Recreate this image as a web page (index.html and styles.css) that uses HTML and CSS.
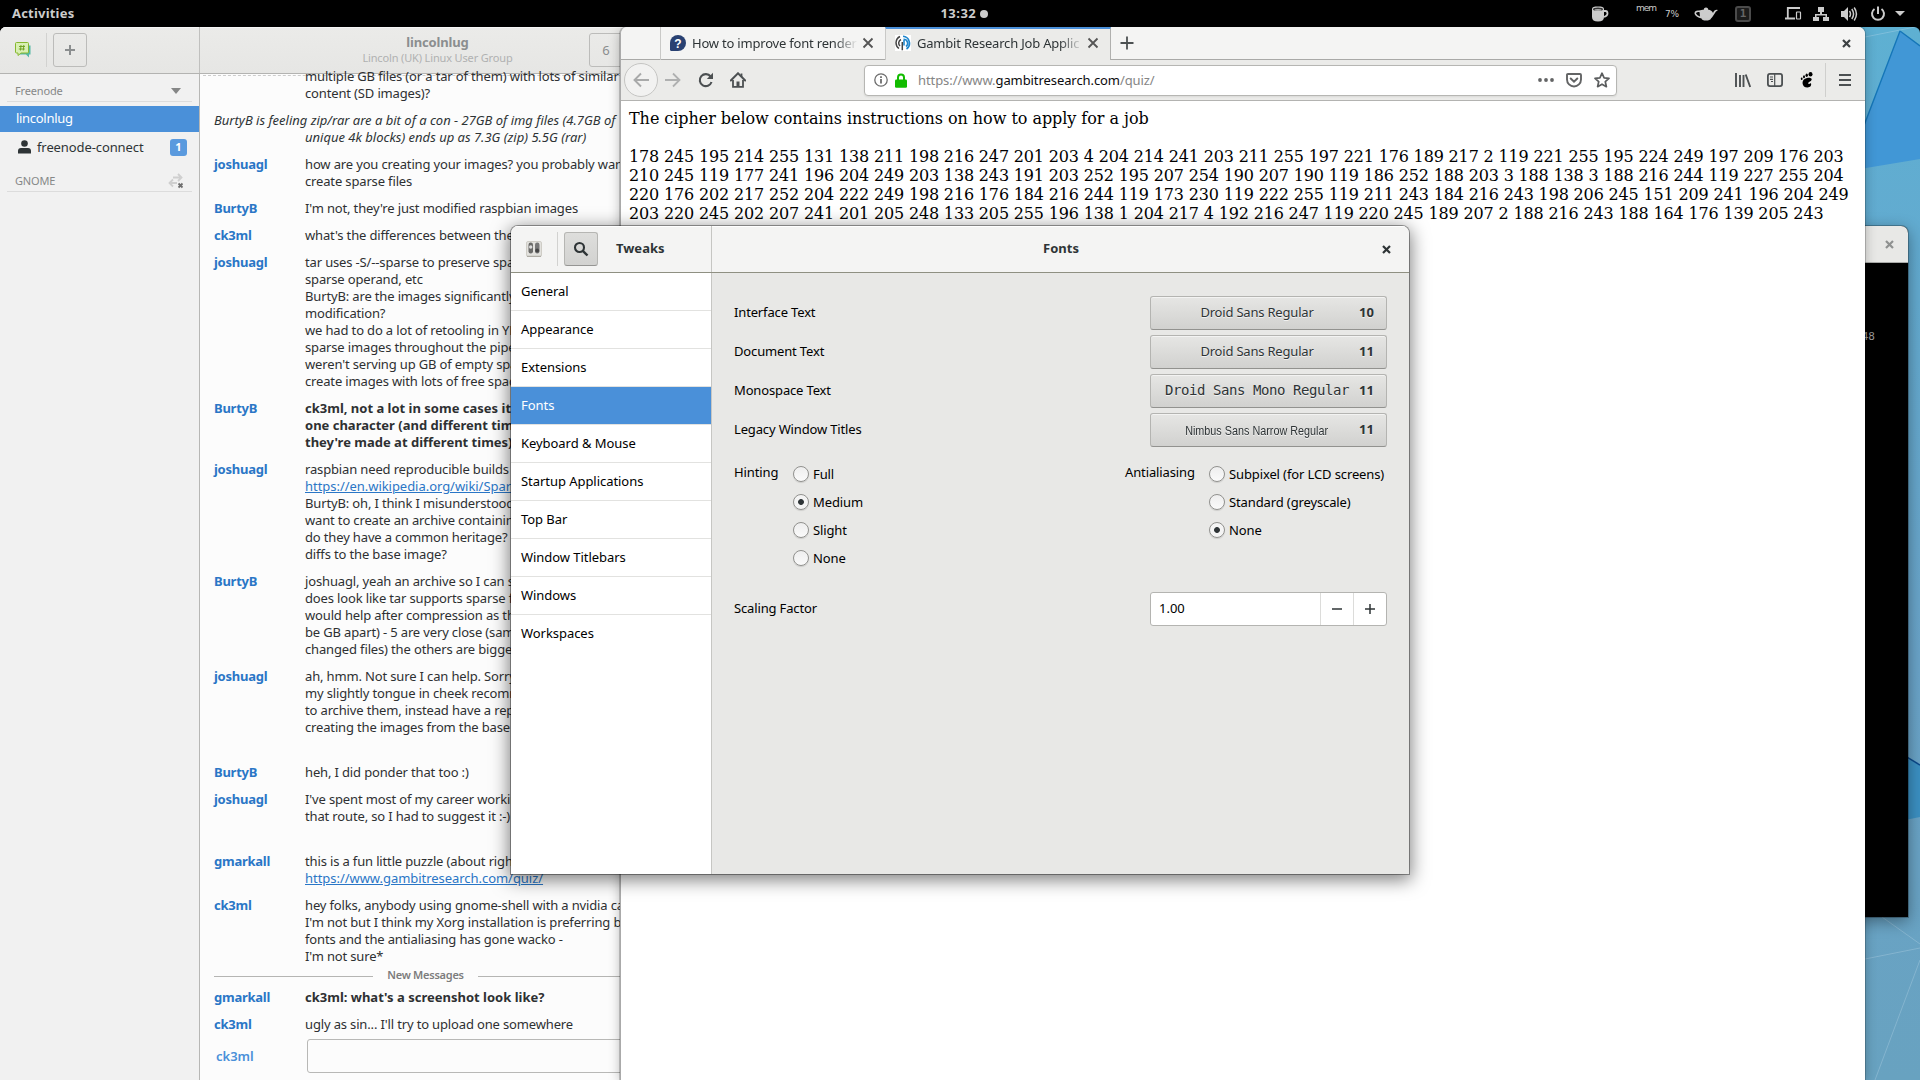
FILE: index.html
```html
<!DOCTYPE html>
<html lang="en">
<head>
<meta charset="utf-8">
<title>Desktop</title>
<link rel="stylesheet" href="styles.css">
</head>
<body>
<div class="desktop">
  <svg class="wallpaper" width="60" height="1053" viewBox="1860 27 60 1053">
    <defs>
      <linearGradient id="sky" x1="0" y1="0" x2="0" y2="1"><stop offset="0" stop-color="#5eb0d2"/><stop offset=".2" stop-color="#62abd0"/><stop offset=".6" stop-color="#6aa4c9"/><stop offset="1" stop-color="#68a2c0"/></linearGradient>
    </defs>
    <rect x="1860" y="27" width="60" height="1053" fill="url(#sky)"/>
    <path d="M1900 31L1920 46V159L1860 169V136z" fill="#4197d6"/>
    <path d="M1860 136L1900 31L1920 46" fill="none" stroke="#1576b8" stroke-width="1.4"/>
    <path d="M1860 38L1920 26" stroke="#8cc4df" stroke-width=".7"/>
    <path d="M1900 755L1920 765V817L1900 821z" fill="#3b90c2"/>
    <path d="M1900 753L1920 765" stroke="#0b4a8c" stroke-width="1.5"/>
    <path d="M1882 917L1920 944M1860 960L1920 948M1920 960L1875 1080" fill="none" stroke="#8bb9d2" stroke-width=".8"/>
  </svg>

  <header class="topbar">
    <span class="activities">Activities</span>
    <div class="clock"><span>13:32</span><i class="dot"></i></div>
    <div class="tray">
      <svg class="mug" width="18" height="16" viewBox="0 0 18 16"><path d="M1 3C1 1 3 .5 7 .5S13 1 13 3V11c0 3-2 4.500-6 4.500S1 14 1 11z" fill="#ccc"/><ellipse cx="7" cy="3.200" rx="5" ry="1.700" fill="#333"/><ellipse cx="7" cy="4" rx="3.500" ry=".9" fill="#aaa"/><path d="M13 5h1.500Q16.500 5 16.500 7.500T12.500 11" fill="none" stroke="#ccc" stroke-width="1.800"/></svg>
      <span class="mem">mem</span><span class="pct">7%</span>
      <svg class="teapot" width="24" height="14" viewBox="0 0 24 14"><path d="M10 1.500Q12 -.5 14 1.500L14 2.500Q18 3 19 6Q20.500 2 24 3Q21.500 4 20 7.500Q18.500 10 17 11.500Q16 13.500 12 13.500T7.500 11.500Q2 10 .6 7Q0 3 5 3.500L10 2.500z" fill="#ccc"/><path d="M5.500 5Q2 4.500 2 6.500Q3 8.500 6 9.500z" fill="#000"/></svg>
      <span class="workspace">1</span>
      <svg class="devices" width="18" height="16" viewBox="0 0 18 16"><path d="M15 2H2.800V12" fill="none" stroke="#ccc" stroke-width="1.800"/><path d="M0 12.500H10" stroke="#ccc" stroke-width="2"/><rect x="11.500" y="6" width="4" height="7" rx=".5" fill="none" stroke="#ccc" stroke-width="1.200"/></svg>
      <svg class="network" width="16" height="16" viewBox="0 0 16 16"><path d="M5 1h6v5H9v2h5v3h2v4H10v-4h2.500v-1.500h-9V11H6v4H0v-4h2V8h5V6H5z" fill="#ccc"/></svg>
      <svg class="volume" width="17" height="16" viewBox="0 0 17 16"><path d="M0 5h3l4-4v14l-4-4H0z" fill="#ccc"/><path d="M8.500 5q2 3 0 6M10.800 3q3.500 5 0 10M13.200 1.500q4.500 6.500 0 13" fill="none" stroke="#ccc" stroke-width="1.500"/></svg>
      <svg class="power" width="16" height="16" viewBox="0 0 16 16"><path d="M4.500 3A6 6 0 1 0 11.500 3M8 .5V8" fill="none" stroke="#ccc" stroke-width="2"/></svg>
      <svg class="menuarrow" width="10" height="5" viewBox="0 0 10 5"><path d="M0 0H10L5 5z" fill="#ccc"/></svg>
    </div>
  </header>

  <section class="window terminal">
    <div class="term-head"><svg width="9" height="9" viewBox="0 0 9 9"><path d="M1 1L8 8M8 1L1 8" stroke="#8f9190" stroke-width="2.200"/></svg></div>
    <div class="term-body">48</div>
  </section>

  <section class="window chat">
    <header class="chat-head">
      <div class="head-left">
        <svg width="16" height="16" viewBox="0 0 16 16"><path d="M4 3.500h11.500v9H14v3l-3-3H4z" fill="#55b8a5"/><path d="M1.500 .5h11q1 0 1 1v8.500q0 1-1 1H6l-3 2.500v-2.500H1.500q-1 0-1-1V1.500q0-1 1-1z" fill="#d9efb4" stroke="#86b82f"/><path d="M6 3L5.500 8.500M8.800 3L8.300 8.500M4 4.500h6M3.800 7h6" stroke="#6c9e1c" stroke-width=".9"/></svg>
        <i class="vsep"></i>
        <span class="flatbtn"><svg width="12" height="12" viewBox="0 0 12 12"><path d="M6 1V11M1 6H11" stroke="#8b8e8f" stroke-width="2"/></svg></span>
      </div>
      <div class="head-title"><b>lincolnlug</b><small>Lincoln (UK) Linux User Group</small></div>
      <span class="flatbtn count">6</span>
    </header>
    <div class="chat-main">
      <aside class="rooms">
        <div class="group"><span class="freenode">Freenode</span><svg width="10" height="6" viewBox="0 0 10 6"><path d="M0 0H10L5 6z" fill="#858686"/></svg></div>
        <div class="room active">lincolnlug</div>
        <div class="room user"><svg width="13" height="14" viewBox="0 0 13 14"><circle cx="6.500" cy="3.500" r="3.300" fill="#2e3436"/><path d="M0 13.500V11q0-3 3-3h7q3 0 3 3v2.500z" fill="#2e3436"/></svg><span class="connect">freenode-connect</span><b class="badge">1</b></div>
        <div class="group gnome"><span>GNOME</span><svg width="16" height="16" viewBox="0 0 16 16"><path d="M5 4.500h7M10 1l3.500 3.500L10 8M9 10H2M5 6.500L1.500 10L5 13.500" fill="none" stroke="#cfcfcf" stroke-width="1.800"/><path d="M10.500 10.500l4 4M14.500 10.500l-4 4" stroke="#6f6f6f" stroke-width="1.800"/></svg></div>
      </aside>
      <div class="log">
        <div class="dashes"></div>
        <div class="msg first"><b></b><p>multiple GB files (or a tar of them) with lots of similar<br>content (SD images)?</p></div>
        <p class="emote">BurtyB is feeling zip/rar are a bit of a con - 27GB of img files (4.7GB of<br><span>unique 4k blocks) ends up as 7.3G (zip) 5.5G (rar)</span></p>
        <div class="msg"><b>joshuagl</b><p>how are you creating your images? you probably want to<br>create sparse files</p></div>
        <div class="msg"><b>BurtyB</b><p>I'm not, they're just modified raspbian images</p></div>
        <div class="msg"><b>ck3ml</b><p>what's the differences between the</p></div>
        <div class="msg"><b>joshuagl</b><p>tar uses -S/--sparse to preserve spa<br>sparse operand, etc<br>BurtyB: are the images significantly<br>modification?<br>we had to do a lot of retooling in YP<br>sparse images throughout the pipe<br>weren't serving up GB of empty spa<br>create images with lots of free spac</p></div>
        <div class="msg hl"><b>BurtyB</b><p>ck3ml, not a lot in some cases it<br>one character (and different tim<br>they're made at different times)</p></div>
        <div class="msg"><b>joshuagl</b><p>raspbian need reproducible builds<br><u>https://en.wikipedia.org/wiki/Spars</u><br>BurtyB: oh, I think I misunderstood<br>want to create an archive containin<br>do they have a common heritage?<br>diffs to the base image?</p></div>
        <div class="msg"><b>BurtyB</b><p>joshuagl, yeah an archive so I can s<br>does look like tar supports sparse f<br>would help after compression as th<br>be GB apart) - 5 are very close (sam<br>changed files) the others are bigger</p></div>
        <div class="msg late"><b>joshuagl</b><p>ah, hmm. Not sure I can help. Sorry<br>my slightly tongue in cheek recomm<br>to archive them, instead have a rep<br>creating the images from the base</p></div>
        <div class="msg"><b>BurtyB</b><p>heh, I did ponder that too :)</p></div>
        <div class="msg late"><b>joshuagl</b><p>I've spent most of my career workin<br>that route, so I had to suggest it :-)</p></div>
        <div class="msg"><b>gmarkall</b><p>this is a fun little puzzle (about right<br><u>https://www.gambitresearch.com/quiz/</u></p></div>
        <div class="msg last"><b>ck3ml</b><p>hey folks, anybody using gnome-shell with a nvidia car<br>I'm not but I think my Xorg installation is preferring bi<br>fonts and the antialiasing has gone wacko -<br>I'm not sure*</p></div>
        <div class="newmsg"><i></i><span>New Messages</span><i></i></div>
        <div class="msg hl"><b>gmarkall</b><p>ck3ml: what's a screenshot look like?</p></div>
        <div class="msg"><b>ck3ml</b><p>ugly as sin... I'll try to upload one somewhere</p></div>
        <div class="entry"><span>ck3ml</span><div></div></div>
      </div>
    </div>
  </section>

  <section class="window browser">
    <div class="tabs">
      <div class="tab">
        <svg width="16" height="16" viewBox="0 0 16 16"><path d="M8 0a8 8 0 1 1 0 16H1.500Q0 16 0 14.500V8A8 8 0 0 1 8 0z" fill="#294172"/><text x="8" y="12.500" text-anchor="middle" class="fav">?</text></svg>
        <span class="tabtext">How to improve font render</span>
        <svg class="tabx" width="12" height="12" viewBox="0 0 12 12"><path d="M1.500 1.500l9 9M10.500 1.500l-9 9" stroke="#555" stroke-width="1.800"/></svg>
      </div>
      <div class="tab current">
        <svg width="16" height="16" viewBox="0 0 16 16"><rect width="16" height="16" fill="#fff"/><path d="M5 1.500A7 7 0 0 0 4 13.500M6 4.500A4 4 0 0 0 5 11M7.300 7V15.300" fill="none" stroke="#444" stroke-width="1.500"/><path d="M11.500 14A7 7 0 0 0 8 1.300M11 11.500A4 4 0 0 0 8.500 4.300M9 5V10.500" fill="none" stroke="#2187cd" stroke-width="1.600"/></svg>
        <span class="tabtext">Gambit Research Job Applic</span>
        <svg class="tabx" width="12" height="12" viewBox="0 0 12 12"><path d="M1.500 1.500l9 9M10.500 1.500l-9 9" stroke="#555" stroke-width="1.800"/></svg>
      </div>
      <svg class="newtab" width="14" height="14" viewBox="0 0 14 14"><path d="M7 .5V13.500M.5 7H13.500" stroke="#4c5152" stroke-width="1.800"/></svg>
      <svg class="winx" width="9" height="9" viewBox="0 0 9 9"><path d="M1 1L8 8M8 1L1 8" stroke="#3c4143" stroke-width="2.200"/></svg>
    </div>
    <div class="toolbar">
      <span class="back"><svg width="16" height="16" viewBox="0 0 16 16"><path d="M8 1.500L1.500 8L8 14.500M1.500 8H16" fill="none" stroke="#a9aaaa" stroke-width="1.900"/></svg></span>
      <svg class="fwd" width="16" height="16" viewBox="0 0 16 16"><path d="M8 1.500L14.500 8L8 14.500M14.500 8H0" fill="none" stroke="#afb0b0" stroke-width="1.800"/></svg>
      <svg class="reload" width="16" height="16" viewBox="0 0 16 16"><path d="M12.600 4.500A6 6 0 1 0 13.500 10" fill="none" stroke="#4c5052" stroke-width="2.100"/><path d="M15 .8V7H8.800z" fill="#4c5052"/></svg>
      <svg class="home" width="16" height="16" viewBox="0 0 16 16"><path d="M.8 8.500L8 1.300L15.200 8.500" fill="none" stroke="#4c5052" stroke-width="2" stroke-linecap="round"/><path d="M3 8V14.800H13V8M11.500 1.500V5" fill="none" stroke="#4c5052" stroke-width="1.800"/><path d="M6.500 9.500h3V15h-3z" fill="#4c5052"/></svg>
      <div class="url">
        <svg width="14" height="14" viewBox="0 0 14 14"><circle cx="7" cy="7" r="6.200" fill="none" stroke="#6c6c6c" stroke-width="1.300"/><path d="M7 6V10.500M7 3.300V5" stroke="#6c6c6c" stroke-width="1.800"/></svg>
        <svg class="lock" width="12" height="15" viewBox="0 0 12 15"><path d="M3 7V4.500a3 3 0 0 1 6 0V7" fill="none" stroke="#12bc00" stroke-width="2"/><rect y="6.500" width="12" height="8.200" rx="1.200" fill="#12bc00"/></svg>
        <span class="addr">https://www.<em>gambitresearch.com</em>/quiz/</span>
        <svg class="more" width="16" height="4" viewBox="0 0 16 4"><circle cx="2" cy="2" r="1.900"/><circle cx="8" cy="2" r="1.900"/><circle cx="14" cy="2" r="1.900"/></svg>
        <svg class="pocket" width="16" height="15" viewBox="0 0 16 15"><path d="M2 1h12q1 0 1 1v4.500a7 7 0 0 1-14 0V2q0-1 1-1z" fill="none" stroke="#636465" stroke-width="1.900"/><path d="M4.700 5.500L8 8.700l3.300-3.200" fill="none" stroke="#636465" stroke-width="2" stroke-linecap="round"/></svg>
        <svg width="16" height="16" viewBox="0 0 16 16"><path d="M8 1.200l2.100 4.600 4.900.5-3.700 3.400 1.100 5L8 12.200l-4.400 2.500 1.100-5L1 6.300l4.900-.5z" fill="none" stroke="#5b5d5e" stroke-width="1.700" stroke-linejoin="round"/></svg>
      </div>
      <svg class="library" width="16" height="16" viewBox="0 0 16 16"><path d="M1 1V15M5 3V15M8.500 3V15M10.700 2.500L15.200 15" stroke="#4c5052" stroke-width="1.900" fill="none"/></svg>
      <svg class="sidebar-i" width="16" height="14" viewBox="0 0 16 14"><rect x=".9" y=".9" width="14.200" height="12.200" rx="2" fill="none" stroke="#4c5052" stroke-width="1.800"/><path d="M7.700 1V13M3 4H6M3 6.300H6M4 8.500H6" stroke="#4c5052" stroke-width="1.200"/></svg>
      <svg class="foot" width="13" height="16" viewBox="0 0 13 16"><ellipse cx="10.500" cy="2.300" rx="2" ry="2.300"/><ellipse cx="6.700" cy="3.300" rx="1.200" ry="1.700"/><ellipse cx="4" cy="4.700" rx="1" ry="1.500"/><ellipse cx="1.700" cy="6.700" rx=".9" ry="1.300"/><path d="M7 6C12 5 13 8 10 9.500Q7.500 10.500 8.500 12Q10 12 11 11Q12 15 7.500 15.500Q3 15.500 2.500 11Q2.500 7 7 6z"/></svg>
      <i class="tsep"></i>
      <svg class="burger" width="12" height="12" viewBox="0 0 12 12"><path d="M0 1H12M0 6H12M0 11H12" stroke="#4c5052" stroke-width="2"/></svg>
    </div>
    <div class="page">
      <p class="cipher-title">The cipher below contains instructions on how to apply for a job</p>
      <p class="cipher">178 245 195 214 255 131 138 211 198 216 247 201 203 4 204 214 241 203 211 255 197 221 176 189 217 2 119 221 255 195 224 249 197 209 176 203<br>210 245 119 177 241 196 204 249 203 138 243 191 203 252 195 207 254 190 207 190 119 186 252 188 203 3 188 138 3 188 216 244 119 227 255 204<br>220 176 202 217 252 204 222 249 198 216 176 184 216 244 119 173 230 119 222 255 119 211 243 184 216 243 198 206 245 151 209 241 196 204 249<br>203 220 245 202 207 241 201 205 248 133 205 255 196 138 1 204 217 4 192 216 247 119 220 245 189 207 2 188 216 243 188 164 176 139 205 243</p>
    </div>
  </section>

  <section class="window tweaks">
    <header class="tw-head">
      <div class="tw-left">
        <svg width="16" height="16" viewBox="0 0 16 16"><rect x=".5" y=".5" width="15" height="15" rx="1.500" fill="#e2e1dd" stroke="#cfcdc6"/><rect x="2.500" y="1.500" width="4.500" height="11" rx="2.200" fill="#6b6b69"/><rect x="9" y="1.500" width="4.500" height="11" rx="2.200" fill="#777"/><circle cx="4.700" cy="6" r="1.700" fill="#ddd"/><circle cx="11.200" cy="9.500" r="1.900" fill="#444"/><path d="M1 15.300h14" stroke="#a5a39c"/></svg>
        <i class="vsep"></i>
        <span class="searchbtn"><svg width="16" height="16" viewBox="0 0 16 16"><circle cx="6.500" cy="6.500" r="4.500" fill="none" stroke="#2e3436" stroke-width="2.100"/><path d="M9.800 9.800L14.500 14.500" stroke="#2e3436" stroke-width="2.400"/></svg></span>
        <b>Tweaks</b>
      </div>
      <div class="tw-title"><b>Fonts</b><svg width="9" height="9" viewBox="0 0 9 9"><path d="M1 1L8 8M8 1L1 8" stroke="#2e3436" stroke-width="2.200"/></svg></div>
    </header>
    <div class="tw-main">
      <nav class="tw-nav">
        <a>General</a><a>Appearance</a><a>Extensions</a><a class="sel">Fonts</a><a>Keyboard &amp; Mouse</a><a>Startup Applications</a><a>Top Bar</a><a>Window Titlebars</a><a>Windows</a><a>Workspaces</a>
      </nav>
      <div class="tw-page">
        <div class="row"><label>Interface Text</label><div class="fontbtn"><span>Droid Sans Regular</span><b>10</b></div></div>
        <div class="row"><label>Document Text</label><div class="fontbtn"><span>Droid Sans Regular</span><b>11</b></div></div>
        <div class="row"><label>Monospace Text</label><div class="fontbtn"><span class="mono">Droid Sans Mono Regular</span><b>11</b></div></div>
        <div class="row"><label>Legacy Window Titles</label><div class="fontbtn"><span class="narrow">Nimbus Sans Narrow Regular</span><b>11</b></div></div>
        <div class="radios">
          <label class="hint">Hinting</label>
          <ul><li><i></i>Full</li><li><i class="on"></i>Medium</li><li><i></i>Slight</li><li><i></i>None</li></ul>
          <label class="anti">Antialiasing</label>
          <ul><li><i></i>Subpixel (for LCD screens)</li><li><i></i>Standard (greyscale)</li><li><i class="on"></i>None</li></ul>
        </div>
        <div class="row scale"><label>Scaling Factor</label>
          <div class="spin"><span>1.00</span><i><svg width="12" height="12" viewBox="0 0 12 12"><path d="M1 6H11" stroke="#2e3436" stroke-width="1.500"/></svg></i><i><svg width="12" height="12" viewBox="0 0 12 12"><path d="M1 6H11M6 1V11" stroke="#2e3436" stroke-width="1.500"/></svg></i></div>
        </div>
      </div>
    </div>
  </section>
</div>
</body>
</html>
```
FILE: styles.css
```css
* { box-sizing: border-box; }
body { margin: 0; font-family: "Noto Sans", sans-serif; font-size: 13px; color: #2e3436; }
p, ul { margin: 0; padding: 0; }
svg { display: block; flex: none; }
i { font-style: normal; }
.desktop { position: relative; width: 1920px; height: 1080px; overflow: hidden; background: #000; }
.wallpaper { position: absolute; left: 1860px; top: 27px; border-top-right-radius: 6px; }

.topbar { height: 27px; background: #000; color: #ccc; display: flex; align-items: center; padding: 0 15px 0 12px; font-weight: 700; line-height: 27px; }
.activities { width: 929px; letter-spacing: .2px; }
.clock { display: flex; align-items: center; gap: 4px; width: 651px; letter-spacing: .5px; }
.dot { width: 8px; height: 8px; border-radius: 50%; background: #ccc; }
.tray { display: flex; align-items: center; height: 27px; }
.mem { font: 9px/9px "DejaVu Sans", sans-serif; margin: -11px 0 0 27px; width: 29px; letter-spacing: -1px; }
.pct { font: 9px/9px "DejaVu Sans", sans-serif; width: 29px; letter-spacing: -.3px; padding-top: 1px; }
.workspace { width: 16px; height: 16px; border: 2px solid #4b4b4b; border-radius: 3px; margin-left: 17px; background: #1c1c1c; color: #666; font: 700 11px/12px "DejaVu Sans Mono", monospace; text-align: center; }
.devices { margin-left: 34px; }
.network { margin-left: 10px; }
.volume { margin-left: 12px; }
.power { margin-left: 12px; }
.menuarrow { margin-left: 9px; }

.window { position: absolute; overflow: hidden; }
.vsep { width: 1px; height: 34px; background: #d2d2d0; }

.terminal { left: 1500px; top: 226px; width: 408px; height: 691px; border-radius: 7px 7px 0 0; background: #000; box-shadow: 0 0 0 1px rgba(0,0,0,.25), 0 4px 16px rgba(0,0,0,.4); }
.term-head { height: 37px; background: #e8e8e6; border-bottom: 1px solid #a9aaa8; display: flex; justify-content: flex-end; align-items: center; padding-right: 14px; }
.term-body { color: #999; font: 11px/14px "DejaVu Sans Mono", monospace; text-align: right; padding: 67px 33px 0 0; }

.chat { left: 0; top: 27px; width: 660px; height: 1053px; background: #fcfcfc; border-radius: 6px 0 0 0; }
.chat-head { height: 47px; background: linear-gradient(#ebebe9, #e6e6e4); border-bottom: 1px solid #b3b3b1; display: flex; box-shadow: inset 0 1px #f5f5f5; }
.head-left { width: 200px; border-right: 1px solid #c0c0be; display: flex; align-items: center; padding-left: 15px; }
.head-left .vsep { margin: 0 6px 0 15px; }
.flatbtn { width: 34px; height: 34px; border: 1px solid #bcbcba; border-radius: 3px; display: flex; align-items: center; justify-content: center; color: #8b8e8f; font-size: 14px; }
.head-title { width: 475px; margin-right: -86px; padding-top: 4px; text-align: center; color: #8b8e8f; }
.head-title b { display: block; line-height: 22px; font-size: 13px; letter-spacing: -.15px; }
.head-title small { display: block; font-size: 11px; line-height: 10px; letter-spacing: -.15px; color: #b0b1b1; }
.count { margin-top: 6px; font-size: 13px; }
.chat-main { display: flex; height: 1006px; }
.rooms { width: 200px; background: #f1f1f1; border-right: 1px solid #b7b7b5; }
.group { height: 22px; margin: 6px 7px 4px 7px; padding: 0 11px 0 8px; border-bottom: 1px solid #dcdcdc; display: flex; align-items: center; justify-content: space-between; font-size: 11px; color: #868888; letter-spacing: -.15px; }
.room { height: 26px; line-height: 25px; padding-left: 16px; }
.active { background: #4a90d9; color: #fff; letter-spacing: -.3px; }
.user { display: flex; align-items: center; padding-left: 18px; margin-top: 2px; }
.connect { width: 139px; padding-left: 6px; letter-spacing: -.1px; }
.badge { width: 17px; height: 17px; border-radius: 3px; background: #5a9ade; color: #fff; text-align: center; font-size: 11px; line-height: 16px; }
.gnome { margin-top: 10px; padding-right: 8px; }

.log { flex: 1; padding-left: 14px; }
.dashes { height: 0; border-top: 1px dashed #ccc; margin: 1px 0 0 -11px; }
.msg { display: flex; line-height: 17px; margin-bottom: 10px; white-space: nowrap; color: #2e3032; letter-spacing: -.15px; }
.msg > b { width: 91px; color: #2a76c6; letter-spacing: -.25px; }
.msg.first { margin-top: -8px; height: 33px; margin-bottom: 11px; }
.hl p { font-weight: 700; letter-spacing: 0; }
.late { margin-bottom: 28px; }
.last { margin-bottom: 2px; }
u { color: #2a76c6; letter-spacing: -.04px; }
.emote { font-style: italic; line-height: 17px; margin-bottom: 10px; white-space: nowrap; }
.emote span { padding-left: 91px; }
.newmsg { display: flex; align-items: center; height: 16px; margin-bottom: 6px; font-size: 11px; line-height: 14px; color: #7d7d7d; }
.newmsg i { height: 1px; background: #b5b5b3; width: 159px; margin-top: 3px; }
.newmsg span { width: 105px; text-align: center; letter-spacing: -.25px; font-weight: 600; }
.entry { display: flex; align-items: center; margin-top: -4px; height: 34px; }
.entry span { width: 93px; color: #4a90d9; font-weight: 600; padding-left: 2px; }
.entry div { flex: 1; height: 34px; border: 1px solid #b8b8b6; border-radius: 3px; }

.browser { left: 620px; top: 27px; width: 1245px; height: 1053px; background: #fff; border-radius: 7px 7px 0 0; border-left: 1px solid #aaa; box-shadow: 0 0 0 1px rgba(0,0,0,.18), 0 2px 12px rgba(0,0,0,.28); }
.tabs { height: 33px; background: #f4f4f3; border-bottom: 1px solid #a9a9a7; display: flex; align-items: center; padding-left: 39px; }
.tab { height: 33px; width: 225px; border-left: 1px solid #c9c9c7; display: flex; align-items: center; padding-left: 9px; }
.tab.current { width: 226px; background: #ebebe9; border-right: 1px solid #b0b0ae; border-top: 2px solid #4a90d9; padding-bottom: 2px; }
.tabtext { width: 166px; margin: 0 4px 0 6px; white-space: nowrap; line-height: 24px; letter-spacing: -.2px; -webkit-mask-image: linear-gradient(90deg, #000 86%, transparent); mask-image: linear-gradient(90deg, #000 86%, transparent); }
.fav { font: 700 12px "Liberation Sans", sans-serif; fill: #fff; }
.newtab { margin-left: 9px; }
.winx { margin-left: auto; margin-right: 14px; }
.toolbar { height: 41px; background: #ebebe9; border-bottom: 1px solid #b3b3b1; display: flex; align-items: center; padding-left: 3px; }
.back { width: 34px; height: 34px; border-radius: 50%; border: 1px solid #c5c5c3; background: #f2f2f1; display: flex; align-items: center; justify-content: center; }
.fwd { margin-left: 7px; }
.reload { margin-left: 17px; }
.home { margin-left: 16px; }
.url { margin-left: 118px; width: 753px; height: 31px; border: 1px solid #b6b6b3; border-radius: 4px; background: #fff; display: flex; align-items: center; padding: 0 6px 0 9px; box-shadow: 0 1px 2px rgba(0,0,0,.08); }
.lock { margin-left: 7px; }
.addr { margin-left: 11px; width: 620px; color: #858585; letter-spacing: -.08px; }
.addr em { font-style: normal; color: #0c0c0d; }
.more { fill: #636465; }
.pocket { margin: 0 12px; }
.library { margin-left: 118px; }
.sidebar-i { margin-left: 16px; }
.foot { margin-left: 17px; }
.tsep { width: 1px; height: 34px; background: #cfcfcd; margin: 0 13px 0 12px; }
.page { padding: 8px 8px; font: 16px/19px "DejaVu Serif", serif; color: #000; white-space: nowrap; }
.cipher-title { margin-bottom: 19px; letter-spacing: -.05px; }
.cipher { letter-spacing: -.16px; }

.tweaks { left: 511px; top: 226px; width: 898px; height: 648px; border-radius: 7px 7px 0 0; background: #e8e8e6; color: #000; box-shadow: 0 0 0 1px rgba(0,0,0,.36), 0 4px 18px 2px rgba(0,0,0,.5); }
.tw-head { height: 47px; background: #f4f4f3; border-bottom: 1px solid #8f9082; display: flex; color: #2e3436; box-shadow: inset 0 1px #fff; }
.tw-head b { padding-bottom: 2px; }
.tw-left { width: 201px; border-right: 1px solid #c6c6c3; display: flex; align-items: center; padding-left: 15px; }
.tw-left .vsep { margin: 0 6px 0 15px; }
.searchbtn { width: 34px; height: 34px; border: 1px solid #b6b6b3; border-bottom-color: #959593; border-radius: 3px; background: linear-gradient(#dededc, #d2d2d0); display: flex; align-items: center; justify-content: center; margin-right: 18px; }
.tw-title { flex: 1; display: flex; align-items: center; }
.tw-title b { margin-left: auto; padding-left: 28px; }
.tw-title svg { margin-left: auto; margin-right: 18px; }
.tw-main { display: flex; height: 601px; }
.tw-nav { width: 201px; background: #fff; border-right: 1px solid #c6c6c3; letter-spacing: -.05px; }
.tw-nav a { display: block; height: 38px; line-height: 36px; padding-left: 10px; border-bottom: 1px solid #e2e2e0; }
.tw-nav a:last-child { border: 0; }
.tw-nav .sel { background: #4a90d9; color: #fff; }
.tw-page { flex: 1; padding: 23px 22px 0; }
.row { display: flex; justify-content: space-between; height: 34px; margin-bottom: 5px; line-height: 31px; }
.row label { line-height: 33px; letter-spacing: -.15px; }
.fontbtn { width: 237px; height: 34px; border: 1px solid #b4b4b1; border-bottom-color: #92928f; border-radius: 3px; background: linear-gradient(#e6e6e4, #d1d1cf); box-shadow: inset 0 1px #f3f3f2; display: flex; color: #2e3436; text-shadow: 0 1px rgba(255,255,255,.7); }
.fontbtn span { flex: 1; text-align: center; padding-left: 4px; white-space: nowrap; letter-spacing: -.2px; }
.fontbtn b { width: 27px; }
.fontbtn .mono { font: 14px/31px "DejaVu Sans Mono", monospace; letter-spacing: -.43px; padding-left: 4px; }
.fontbtn .narrow { font: 13.500px/33px "Liberation Sans Narrow", "Liberation Sans", sans-serif; letter-spacing: 0; transform: scaleX(.8); }
.radios { display: flex; padding-top: 8px; height: 140px; line-height: 28px; letter-spacing: -.12px; }
.radios label { line-height: 24px; }
.hint { width: 59px; }
.anti { width: 84px; margin-left: auto; }
.anti + ul { width: 178px; }
ul { list-style: none; }
li { display: flex; align-items: center; height: 28px; gap: 4px; white-space: nowrap; }
li i { width: 16px; height: 16px; border-radius: 50%; border: 1px solid #91918e; background: linear-gradient(#eee, #fafafa); box-shadow: 0 1px 1px rgba(0,0,0,.12); }
li i.on { background: radial-gradient(circle, #2e3436 2.500px, #f4f4f4 3.300px); }
.spin { width: 237px; height: 34px; border: 1px solid #b4b4b1; border-radius: 3px; background: #fff; display: flex; }
.spin span { flex: 1; padding-left: 8px; }
.spin i { width: 33px; border-left: 1px solid #dcdcda; display: flex; align-items: center; justify-content: center; }
```
